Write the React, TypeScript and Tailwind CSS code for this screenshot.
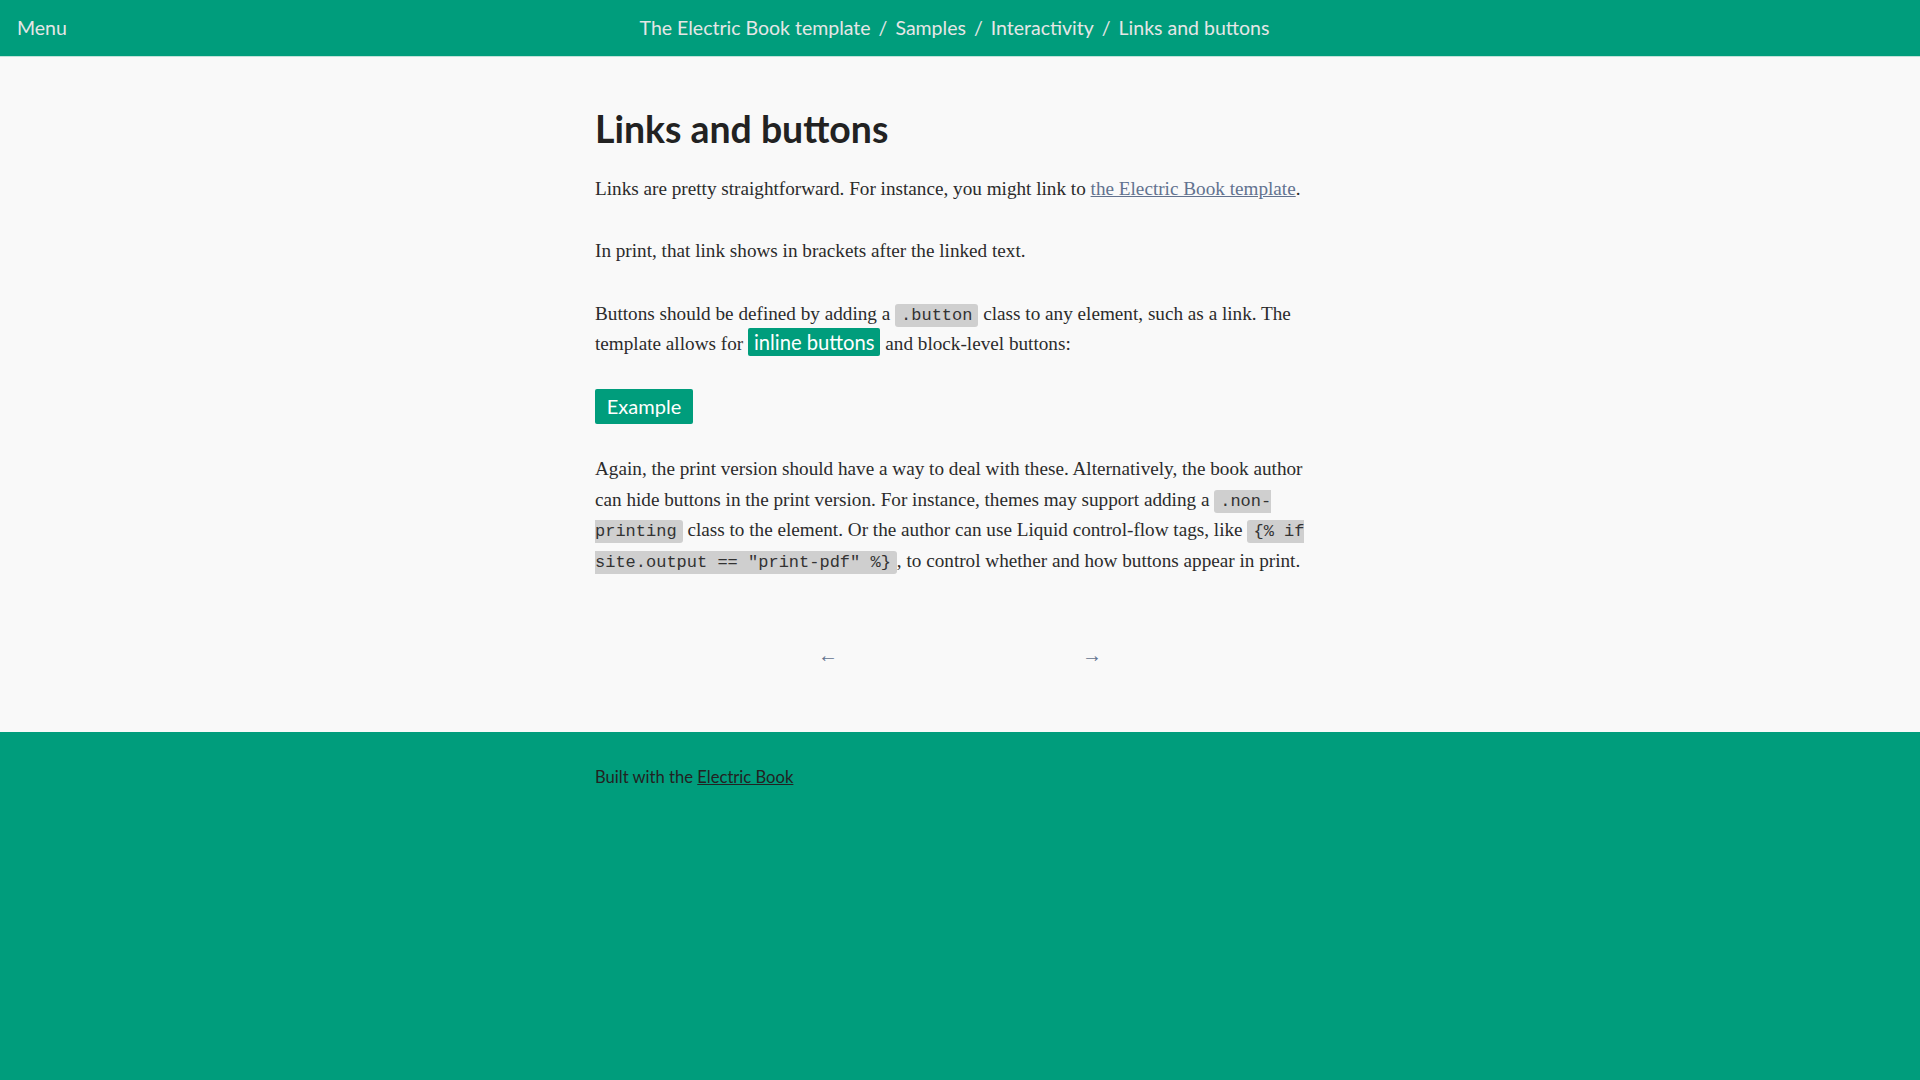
const sans = "font-['Lato','Open_Sans',sans-serif]";

function Code({ children }: { children: React.ReactNode }) {
  return (
    <code className="rounded-[3px] bg-[#cfcfcf] px-[6px] py-[2px] font-['Liberation_Mono',monospace] text-[17px] leading-[20px] text-[#333]">
      {children}
    </code>
  );
}

export default function App() {
  return (
    <div className="flex min-h-screen flex-col bg-[#f9f9f9]">
      <header className={`grid h-[57px] grid-cols-[1fr_auto_1fr] items-center border-b border-[#bfe3d9] bg-[#009d7c] px-[17px] text-[19.5px] text-[#e6e6e6] ${sans}`}>
        <span>Menu</span>
        <nav className="mr-[11px] flex items-center gap-[8px]">
          <span>The Electric Book template</span>
          <span>/</span>
          <span>Samples</span>
          <span>/</span>
          <span>Interactivity</span>
          <span>/</span>
          <span>Links and buttons</span>
        </nav>
        <span />
      </header>

      <main className="mx-auto w-[730px] pt-[50px] pb-[65px] font-['Liberation_Serif',serif] text-[19.2px] leading-[30.8px] text-[#2b2b2b]">
        <h1 className={`mb-[24px] text-[37.4px] leading-[43px] font-bold text-[#222] ${sans}`}>
          Links and buttons
        </h1>
        <p className="mb-[31.5px]">
          Links are pretty straightforward. For instance, you might link to{" "}
          <a href="#" className="text-[#62728f] underline">
            the Electric Book template
          </a>
          .
        </p>
        <p className="mb-[31.5px]">In print, that link shows in brackets after the linked text.</p>
        <p className="mb-[28.6px]">
          Buttons should be defined by adding a <Code>.button</Code> class to any element, such as a link. The
          template allows for{" "}
          <a
            href="#"
            className={`rounded-[2px] bg-[#009d7c] px-[6px] py-[2px] text-[20.2px] leading-[22px] text-white ${sans}`}
          >
            inline buttons
          </a>{" "}
          and block-level buttons:
        </p>
        <a
          href="#"
          className={`mb-[30px] flex h-[35px] w-[98px] items-center justify-center rounded-[2px] bg-[#009d7c] text-[20px] text-white ${sans}`}
        >
          Example
        </a>
        <p>
          Again, the print version should have a way to deal with these. Alternatively, the book author can hide
          buttons in the print version. For instance, themes may support adding a <Code>.non-printing</Code> class
          to the element. Or the author can use Liquid control-flow tags, like{" "}
          <Code>{'{% if site.output == "print-pdf" %}'}</Code>, to control whether and how buttons appear in print.
        </p>
        <div className="mt-[66.5px] flex justify-center gap-[244px] text-[20px] leading-[24px] text-[#62728f]">
          <a href="#">←</a>
          <a href="#">→</a>
        </div>
      </main>

      <footer className={`flex-1 bg-[#009d7c] ${sans}`}>
        <div className="mx-auto w-[730px] pt-[33px] text-[16.6px] text-[#222]">
          Built with the{" "}
          <a href="#" className="underline">
            Electric Book
          </a>
        </div>
      </footer>
    </div>
  );
}
